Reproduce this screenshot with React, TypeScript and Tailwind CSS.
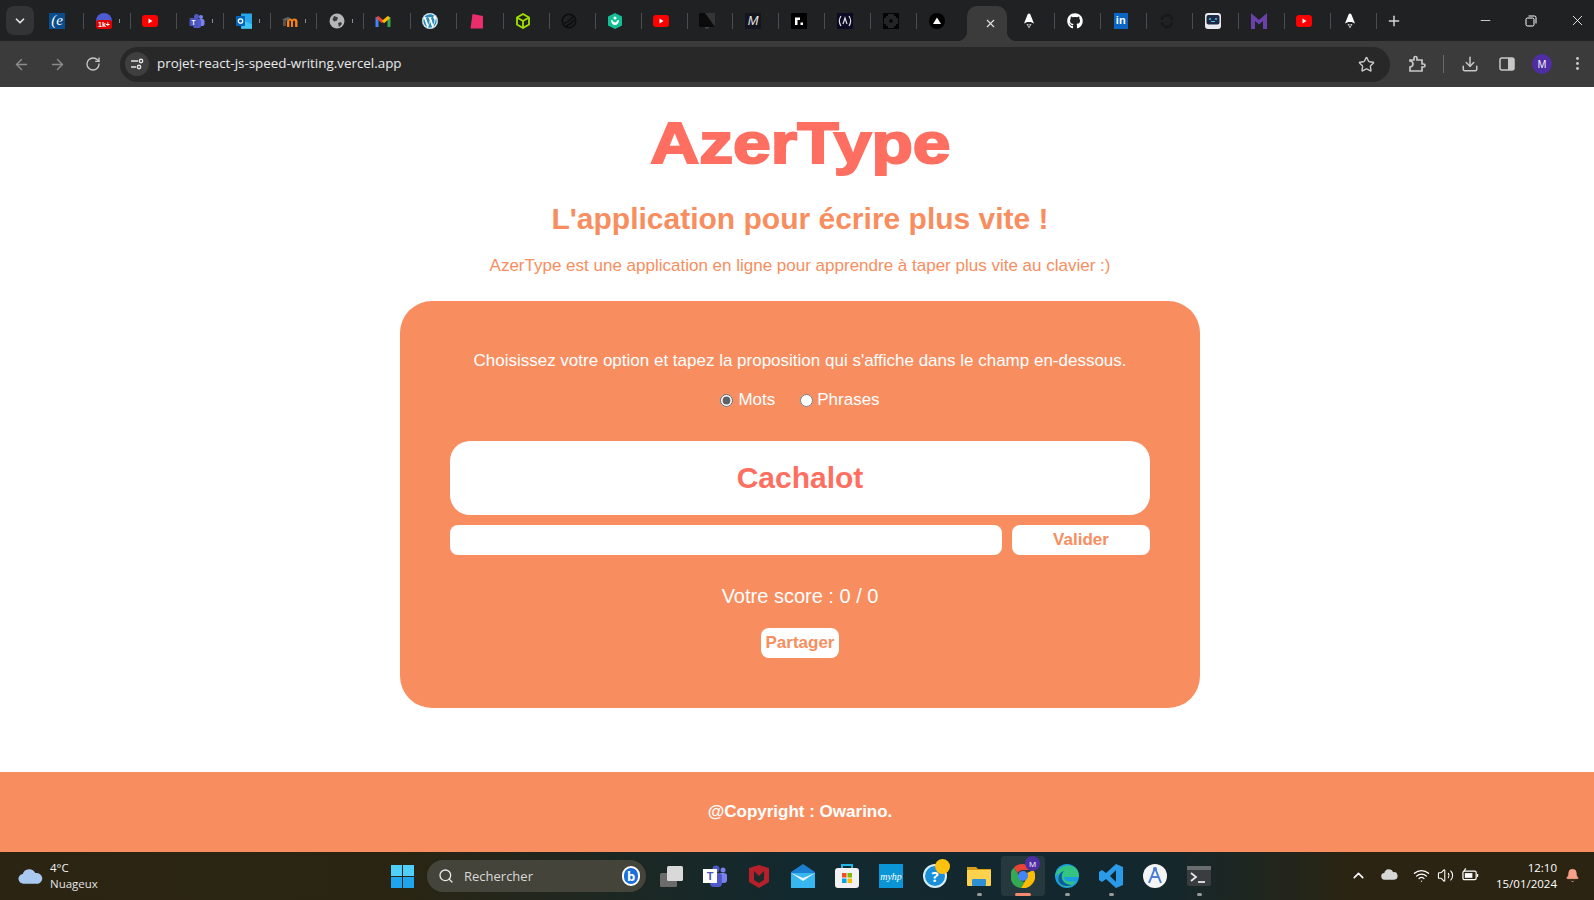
import type { ReactNode } from "react";
import { ChevronDown, ChevronUp, Download, MoreVertical, Plus, RotateCw, Search, Star, X, ArrowLeft, ArrowRight, Minus, Volume2, Wifi, Bell } from "lucide-react";
import { FaGithub, FaWordpress } from "react-icons/fa";

const Yt = () => (
  <svg viewBox="0 0 16 12" className="h-3 w-4">
    <rect width="16" height="12" rx="3" fill="#f00" />
    <path d="M6.500 3.500l4 2.500-4 2.500z" fill="#fff" />
  </svg>
);

const Rocket = () => (
  <svg viewBox="0 0 16 16" className="h-4 w-4">
    <path d="M8 0.500c1 0 1.600 1 2.200 3l2.800 7-3.300-1.500H6.300L3 10.500l2.800-7C6.400 1.500 7 .5 8 .5z" fill="#fff" />
    <path d="M5.500 11h5L8 15.500z" fill="#ccc" />
    <path d="M6.800 11.500h2.400L8 13.800z" fill="#1f2122" />
  </svg>
);

const tabsBefore: { icon: ReactNode; mark?: boolean }[] = [
  { icon: <div className="flex h-4 w-4 items-center justify-center bg-[#0a4d8c] font-['Liberation_Serif',serif] text-[15px] italic leading-none text-white">(e</div> },
  { icon: <svg viewBox="0 0 16 16" className="h-4 w-4"><circle cx="8" cy="8" r="8" fill="#4f5bd5" /><rect x="0" y="7" width="16" height="9" rx="2.500" fill="#e00000" /><text x="8" y="14" textAnchor="middle" fontSize="7" fontWeight="700" fill="#fff" fontFamily="Liberation Sans">1k+</text></svg>, mark: true },
  { icon: <Yt /> },
  { icon: <svg viewBox="0 0 16 16" className="h-4 w-4"><circle cx="12" cy="4" r="2" fill="#7b83eb" /><rect x="9" y="6" width="6.500" height="7" rx="2" fill="#7b83eb" /><circle cx="7.500" cy="3.500" r="2.500" fill="#5059c9" /><rect x="4" y="6" width="8" height="9" rx="2" fill="#5059c9" /><rect x="0.500" y="5" width="8" height="8" rx="1" fill="#4b53bc" /><text x="4.500" y="11.500" textAnchor="middle" fontSize="6.500" fontWeight="700" fill="#fff" fontFamily="Liberation Sans">T</text></svg>, mark: true },
  { icon: <svg viewBox="0 0 16 16" className="h-4 w-4"><rect x="5" y="0.500" width="11" height="15" fill="#28a8ea" /><path d="M9 8l7 3.500V16H5z" fill="#50d9ff" opacity=".6" /><rect x="0" y="3" width="9" height="10" fill="#0364b8" /><circle cx="4.500" cy="8" r="2.200" fill="none" stroke="#fff" strokeWidth="1.300" /></svg>, mark: true },
  { icon: <svg viewBox="0 0 16 16" className="h-4 w-4"><path d="M5 14V8.500C5 6.500 6.500 5.500 8 5.500c1 0 1.800.3 2.300 1 .5-.7 1.300-1 2.200-1 1.700 0 3 1 3 3V14h-2.400V9c0-1-.3-1.500-1-1.500S11 8 11 9v5H9V9c0-1-.3-1.500-1-1.500S7.400 8 7.400 9v5z" fill="#f98012" /><path d="M0 6.500L6 4l3 1.500L4 8z" fill="#666" /><path d="M1 7v6h3V8z" fill="#555" /></svg>, mark: true },
  { icon: <svg viewBox="0 0 16 16" className="h-4 w-4"><circle cx="8" cy="8" r="7.500" fill="#b4b6b8" /><path d="M5 3l4 1.500-1 3-3 1-1.500-2zM9 10l3-1 1 2-3 3z" fill="#3a3b3d" /></svg>, mark: true },
  { icon: <svg viewBox="0 0 16 16" className="h-4 w-4" fill="none" strokeWidth="3"><path d="M2 14V4" stroke="#4285f4" /><path d="M14 14V4" stroke="#34a853" /><path d="M2 4l6 5" stroke="#ea4335" /><path d="M14 4L8 9" stroke="#fbbc04" /></svg> },
  { icon: <FaWordpress size={16} color="#2b8ab8" className="rounded-full bg-white" /> },
  { icon: <svg viewBox="0 0 16 16" className="h-4 w-4"><path d="M3.500 1L14 3v12.500H1.500z" fill="#ea2e6c" /></svg> },
  { icon: <svg viewBox="0 0 16 16" className="h-4 w-4" fill="none" stroke="#a3e000" strokeWidth="1.800"><path d="M8 1l6 3.500v7L8 15l-6-3.500v-7z" /><path d="M2 4.500L8 8l6-3.500M8 8v7" /></svg> },
  { icon: <svg viewBox="0 0 16 16" className="h-4 w-4" fill="none" stroke="#0c0d0e" strokeWidth="1.500"><circle cx="8" cy="8" r="6.800" /><path d="M3 10c3 0 7-3 9-7M5 13c3-1 6-3 8-6" /></svg> },
  { icon: <svg viewBox="0 0 16 16" className="h-4 w-4"><path d="M8 0l7 3.500v9L8 16l-7-3.500v-9z" fill="#14bf96" /><circle cx="8" cy="5" r="1.500" fill="#fff" /><path d="M4 7c0 3 2 5 4 5s4-2 4-5l-2 .5c0 1-1 2-2 2s-2-1-2-2z" fill="#fff" /></svg> },
  { icon: <Yt /> },
  { icon: <svg viewBox="0 0 16 16" className="h-4 w-4"><rect width="16" height="14" fill="#0b0b0b" /><path d="M6 0h10v14z" fill="#333537" /><rect x="6" y="14" width="4" height="1.500" fill="#444" /></svg> },
  { icon: <div className="flex h-4 w-4 items-center justify-center bg-[#14141f] font-['Liberation_Sans',sans-serif] text-[13px] italic leading-none text-[#e5e5e5]">M</div> },
  { icon: <svg viewBox="0 0 16 16" className="h-4 w-4"><rect width="16" height="16" rx="1" fill="#000" /><path d="M4 12V4.500h5V7H6.500v5z" fill="#fff" /><rect x="9.500" y="9.500" width="2.500" height="2.500" fill="#fff" /></svg> },
  { icon: <svg viewBox="0 0 16 16" className="h-4 w-4"><rect width="16" height="16" fill="#0a0a23" /><path d="M4 3c-2 3-2 7 0 10M12 3c2 3 2 7 0 10M6 11l2-6 2 6" fill="none" stroke="#dfdfe2" strokeWidth="1.200" /></svg> },
  { icon: <svg viewBox="0 0 16 16" className="h-4 w-4"><rect width="16" height="16" fill="#050505" /><path d="M5 1h6v2h2v2h2v6h-2v2h-2v2H5v-2H3v-2H1V5h2V3h2z" fill="#242526" /><circle cx="8" cy="8" r="1.800" fill="#050505" /></svg> },
  { icon: <svg viewBox="0 0 16 16" className="h-4 w-4"><circle cx="8" cy="8" r="8" fill="#000" /><path d="M8 4.500l4 6.500H4z" fill="#fff" /></svg> },
];

const tabsAfter: ReactNode[] = [
  <Rocket />,
  <FaGithub size={16} color="#fff" />,
  <div className="flex h-4 w-[14px] items-center justify-center bg-[#0a66c2] text-[11px] font-bold leading-none text-white">in</div>,
  <svg viewBox="0 0 16 16" className="h-4 w-4" fill="none" stroke="#18191b" strokeWidth="2.500"><path d="M3 7a5 5 0 0 1 10 0M13 9a5 5 0 0 1-10 0" /></svg>,
  <svg viewBox="0 0 16 16" className="h-4 w-4"><rect width="16" height="16" rx="3" fill="#e8eaf0" /><rect x="1.500" y="2" width="13" height="9.500" rx="2" fill="#1c2a44" /><circle cx="5" cy="6" r="1" fill="#4fc3f7" /><circle cx="11" cy="6" r="1" fill="#4fc3f7" /><path d="M6 8.500h4" stroke="#4fc3f7" /></svg>,
  <svg viewBox="0 0 16 16" className="h-4 w-4"><path d="M0 16V0l8 7 8-7v16h-4V8l-4 3.500L4 8v8z" fill="#6941a8" /></svg>,
  <Yt />,
  <Rocket />,
];

function Tab({ icon, mark, noSep, wide }: { icon: ReactNode; mark?: boolean; noSep?: boolean; wide?: boolean }) {
  return (
    <div
      className={[
        "relative flex h-[41px] shrink-0 items-center pl-[11.600px]",
        wide ? "w-[46.650px]" : "w-[45.950px]",
      ].join(" ")}
    >
      <div className="flex h-4 w-4 items-center justify-center">{icon}</div>
      {mark && <div className="absolute right-[11px] top-[19px] h-[4px] w-px bg-[#8a8c8e]" />}
      {!noSep && <div className="absolute right-0 top-[12.500px] h-4 w-px bg-[#4a4c4f]" />}
    </div>
  );
}

function TabBar() {
  return (
    <div className="flex h-[41px] shrink-0 items-center bg-[#1f2122]">
      <div className="ml-[6px] mr-[3.400px] flex h-[29px] w-[28px] shrink-0 items-center justify-center rounded-lg bg-[#323436]">
        <ChevronDown size={14} strokeWidth={3} className="text-[#e3e3e3]" />
      </div>
      {tabsBefore.map((t, i) => (
        <Tab key={i} icon={t.icon} mark={t.mark} wide={i < 10} noSep={i === tabsBefore.length - 1} />
      ))}
      {/* onglet actif */}
      <div className="relative ml-[3.600px] mr-[2.500px] mt-[6px] flex h-[35px] w-[40px] shrink-0 items-center justify-center self-start rounded-t-[10px] bg-[#3b3b3b] pl-[8px]">
        <div className="absolute -left-[10px] bottom-0 h-[10px] w-[10px] bg-[radial-gradient(circle_at_0_0,transparent_10px,#3b3b3b_10.500px)]" />
        <X size={13} strokeWidth={2} className="text-[#e3e3e3]" />
        <div className="absolute -right-[10px] bottom-0 h-[10px] w-[10px] bg-[radial-gradient(circle_at_100%_0,transparent_10px,#3b3b3b_10.500px)]" />
      </div>
      {tabsAfter.map((icon, i) => (
        <Tab key={i} icon={icon} />
      ))}
      <Plus size={16} strokeWidth={2.200} className="ml-[9.500px] text-[#d5d5d5]" />
      <div className="-mr-[6px] ml-auto flex items-center">
        <div className="flex w-[46px] justify-center"><Minus size={15} className="text-white" strokeWidth={1.200} /></div>
        <div className="flex w-[46px] justify-center">
          <svg viewBox="0 0 12 12" className="h-3 w-3" fill="none" stroke="#fff"><rect x="1" y="3" width="8" height="8" rx="1.500" /><path d="M3.500 1h6a1.500 1.500 0 0 1 1.500 1.500v6" /></svg>
        </div>
        <div className="flex w-[46px] justify-center"><X size={17} className="text-white" strokeWidth={1.200} /></div>
      </div>
    </div>
  );
}

function Toolbar() {
  return (
    <div className="flex h-[46px] shrink-0 items-center bg-[#3b3b3b]">
      <div className="flex w-[120px] items-center pl-[13px] text-[#8a8a8a]">
        <ArrowLeft size={17} strokeWidth={2} />
        <ArrowRight size={17} strokeWidth={2} className="ml-[19px]" />
        <RotateCw size={16} strokeWidth={2} className="ml-[19px] text-[#c7c7c7]" />
      </div>
      <div className="flex h-[35px] w-[1270px] items-center rounded-full bg-[#282828] pl-[5px] pr-[15px]">
        <div className="flex h-[24px] w-[24px] items-center justify-center rounded-full bg-[#3f3f3f]">
          <svg viewBox="0 0 14 14" className="h-[14px] w-[14px]" fill="none" stroke="#e3e3e3" strokeWidth="1.400"><path d="M1 4h7M1 10h5" /><circle cx="11" cy="4" r="1.700" /><circle cx="9" cy="10" r="1.700" /></svg>
        </div>
        <span className="ml-[8px] font-['Open_Sans',sans-serif] text-[13.400px] leading-none text-[#e8eaed]">projet-react-js-speed-writing.vercel.app</span>
        <Star size={17} strokeWidth={2} className="ml-auto text-[#c7c7c7]" />
      </div>
      <div className="relative h-full flex-1 text-[#c7c7c7]">
        <svg viewBox="0 0 18 18" className="absolute left-[18px] top-[14px] h-[18px] w-[18px]" fill="none" stroke="currentColor" strokeWidth="1.700"><path d="M2 5h4V3a1.500 1.500 0 0 1 3 0v2h5v4h1.500a1.500 1.500 0 0 1 0 3H14v4H2v-4a2 2 0 0 0 0-6z" /></svg>
        <div className="absolute left-[53px] top-[14px] h-[18px] w-px bg-[#6a6a6a]" />
        <Download size={18} strokeWidth={2} className="absolute left-[71px] top-[14px]" />
        <svg viewBox="0 0 16 16" className="absolute left-[109px] top-[15px] h-4 w-4"><rect x="1" y="2" width="14" height="12" rx="2" fill="none" stroke="currentColor" strokeWidth="1.500" /><rect x="9" y="2" width="6" height="12" rx="1" fill="currentColor" /></svg>
        <div className="absolute left-[142px] top-[13px] flex h-5 w-5 items-center justify-center rounded-full bg-[#4f2ea3] font-['Open_Sans',sans-serif] text-[10px] text-white">M</div>
        <MoreVertical size={17} strokeWidth={2.200} className="absolute left-[179px] top-[14px]" />
      </div>
    </div>
  );
}

function Card() {
  return (
    <section className="mt-[23px] w-[800px] rounded-[32px] bg-[#f88e60] px-[50px] pb-[50px] pt-[48px] text-white">
      <p className="text-center text-[17px] leading-6">
        Choisissez votre option et tapez la proposition qui s'affiche dans le champ en-dessous.
      </p>
      <div className="mt-[15px] flex h-6 items-center justify-center text-[17px]">
        <input type="radio" name="mode" defaultChecked className="m-0 h-[13px] w-[13px] accent-[#5f6368]" />
        <label className="ml-[5px]">Mots</label>
        <input type="radio" name="mode" className="m-0 ml-[25px] h-[13px] w-[13px]" />
        <label className="ml-[4px]">Phrases</label>
      </div>
      <div className="mt-[29px] flex h-[74px] items-center justify-center rounded-[20px] bg-white pb-[2px] text-[30px] font-bold text-[#fe6f61]">
        Cachalot
      </div>
      <div className="mt-[10px] flex gap-[10px]">
        <input type="text" className="h-[30px] flex-1 rounded-lg bg-white px-2 outline-none" />
        <button type="button" className="h-[30px] w-[138px] rounded-lg bg-white text-[17px] font-bold text-[#f88e60]">
          Valider
        </button>
      </div>
      <p className="mt-[26px] text-center text-[20px] leading-[30px]">Votre score : 0 / 0</p>
      <div className="mt-[17px] flex justify-center">
        <button type="button" className="h-[30px] rounded-lg bg-white px-[5px] text-[17px] font-bold text-[#f88e60]">
          Partager
        </button>
      </div>
    </section>
  );
}

const dock: { node: ReactNode; dot?: "gray" | "active" }[] = [
  { node: <svg viewBox="0 0 24 24" className="h-6 w-6"><rect x="1" y="9" width="17" height="14" rx="1.500" fill="#6b6b6b" /><rect x="8" y="2" width="16" height="15" rx="1.500" fill="#d9d9d9" /></svg> },
  { node: <svg viewBox="0 0 24 24" className="h-6 w-6"><circle cx="20" cy="6" r="2.500" fill="#7b83eb" /><rect x="15" y="9" width="9" height="10" rx="3" fill="#7b83eb" /><circle cx="13" cy="5" r="3.500" fill="#5059c9" /><rect x="7" y="9" width="12" height="14" rx="4" fill="#5059c9" /><rect x="0" y="5" width="14" height="14" fill="#fff" /><text x="7" y="16" textAnchor="middle" fontSize="11" fontWeight="700" fill="#4b53bc" fontFamily="Liberation Sans">T</text></svg> },
  { node: <svg viewBox="0 0 24 24" className="h-6 w-6"><path d="M2 4l10-3 10 3v14l-10 6L2 18z" fill="#b5202a" /><path d="M7 7l5 5 5-5v9l-5 3-5-3z" fill="#1c2a2c" /></svg> },
  { node: <svg viewBox="0 0 24 24" className="h-6 w-6"><path d="M0 8l12-8 12 8v16H0z" fill="#1a7fd1" /><path d="M0 9h24v15H0z" fill="#38b6f0" /><path d="M0 9l12 8 12-8-12 5z" fill="#e8f6fe" /></svg> },
  { node: <svg viewBox="0 0 24 24" className="h-6 w-6"><path d="M7 5V1h10v4" fill="none" stroke="#22b5e8" strokeWidth="2" /><rect x="0" y="4" width="24" height="20" rx="3" fill="#f2f2f2" /><rect x="7" y="9" width="4.500" height="4.500" fill="#f25022" /><rect x="12.500" y="9" width="4.500" height="4.500" fill="#7fba00" /><rect x="7" y="14.500" width="4.500" height="4.500" fill="#00a4ef" /><rect x="12.500" y="14.500" width="4.500" height="4.500" fill="#ffb900" /></svg> },
  { node: <div className="flex h-6 w-6 items-center justify-center bg-[#0a96d6] font-['Liberation_Serif',serif] text-[10px] italic text-white">myhp</div> },
  {
    node: (
      <div className="relative h-6 w-6">
        <div className="flex h-6 w-6 items-center justify-center rounded-full border-2 border-[#d8eefa] bg-[#1b90d8] text-[15px] font-bold leading-none text-white">?</div>
        <div className="absolute -right-[3px] -top-[5px] h-[15px] w-[15px] rounded-full bg-[#ffc20e]" />
      </div>
    ),
  },
  { node: <svg viewBox="0 0 24 24" className="h-6 w-6"><path d="M0 3h9l2 2h13v4H0z" fill="#d99e1a" /><rect x="0" y="6" width="24" height="16" rx="1" fill="#ffd24d" /><rect x="5" y="15" width="14" height="7" rx="1" fill="#2d8fd5" /></svg>, dot: "gray" },
  {
    node: (
      <div className="relative h-6 w-6">
        <svg viewBox="0 0 24 24" className="h-6 w-6">
          <path d="M12 0a12 12 0 0 1 10.400 6H12a6 6 0 0 0-5.500 3.500L3 3.500A12 12 0 0 1 12 0z" fill="#ea4335" />
          <path d="M3 3.500l5.500 9.500a6 6 0 0 0 5 5l-3.500 6A12 12 0 0 1 3 3.500z" fill="#34a853" />
          <path d="M22.400 6A12 12 0 0 1 10 24l5.500-9.500A6 6 0 0 0 16 9z" fill="#fbbc04" />
          <circle cx="12" cy="12" r="5" fill="#4285f4" />
        </svg>
        <div className="absolute -right-[5px] -top-[8px] flex h-[15px] w-[15px] items-center justify-center rounded-full bg-[#4f2ea3] text-[8px] text-white">M</div>
      </div>
    ),
    dot: "active",
  },
  { node: <svg viewBox="0 0 24 24" className="h-6 w-6"><circle cx="12" cy="12" r="12" fill="#1b9de2" /><path d="M0 12C2 3 12-1 19 3c4 2 5 7 5 10H9c0 4 5 6 12 4-3 5-10 8-15 4-4-3-4-9 0-12-3 1-5 2-6 3z" fill="#33c481" /><path d="M4 18c-2-5 1-10 5-11-3 3-3 8 0 11 2 2 5 3 8 3-5 2-11 1-13-3z" fill="#0c59a4" /></svg>, dot: "gray" },
  { node: <svg viewBox="0 0 24 24" className="h-6 w-6"><path d="M17 0l7 3v18l-7 3-10-9-4 3-3-2V8l3-2 4 3zM17 6l-6 6 6 6z" fill="#2a9be8" /></svg>, dot: "gray" },
  { node: <svg viewBox="0 0 24 24" className="h-6 w-6"><circle cx="12" cy="12" r="12" fill="#f5f5f5" /><path d="M12 4l-6 15M12 4l6 15M8 13h8" stroke="#4a7fd8" strokeWidth="2" fill="none" /><circle cx="12" cy="5" r="2" fill="#4a7fd8" /></svg> },
  { node: <svg viewBox="0 0 24 24" className="h-6 w-6"><rect y="2" width="24" height="20" rx="2" fill="#3a3d40" /><rect y="2" width="24" height="4" fill="#6a6d70" /><path d="M4 9l5 4-5 4" fill="none" stroke="#e6e6e6" strokeWidth="1.800" /><path d="M11 18h7" stroke="#e6e6e6" strokeWidth="1.800" /></svg>, dot: "gray" },
];

function Taskbar() {
  return (
    <div className="flex h-12 shrink-0 items-center bg-[linear-gradient(90deg,#2b2412_0%,#2a2513_25%,#12292f_50%,#13282e_72%,#2b2412_85%,#2b2412_100%)] font-['Open_Sans',sans-serif] text-white">
      <svg viewBox="0 0 26 18" className="ml-[18px] h-[18px] w-[25px] shrink-0">
        <path d="M6 17a5 5 0 0 1-1-10 7 7 0 0 1 13-1 5.500 5.500 0 0 1 3 11z" fill="#a9c9f0" />
      </svg>
      <div className="ml-[7px] w-[341px] shrink-0 text-[11.500px] leading-4">
        <div className="text-[#f2f2f2]">4°C</div>
        <div className="text-[#e3e3e3]">Nuageux</div>
      </div>
      <div className="grid h-[23px] w-[23px] shrink-0 grid-cols-2 gap-[1px]">
        <div className="bg-[#4fd0fb]" />
        <div className="bg-[#4fd0fb]" />
        <div className="bg-[#1ea5ee]" />
        <div className="bg-[#1ea5ee]" />
      </div>
      <div className="ml-[13px] flex h-8 w-[219px] shrink-0 items-center rounded-full bg-[#44443a] pl-[11px] pr-[6px]">
        <Search size={16} strokeWidth={2} className="text-[#e8e8e8]" />
        <span className="ml-[10px] pt-[1px] text-[13px] text-[#d9d9d9]">Rechercher</span>
        <div className="ml-auto flex h-[20px] w-[18px] items-center justify-center rounded-full border-2 border-white bg-[#1b6fd8] text-[13px] font-bold leading-none text-white">b</div>
      </div>
      <div className="flex shrink-0 pl-[3px]">
        {dock.map((d, i) => (
          <div
            key={i}
            className={[
              "relative flex h-10 w-11 items-center justify-center rounded",
              d.dot === "active" ? "bg-[#ffffff14]" : "",
            ].join(" ")}
          >
            {d.node}
            {d.dot === "gray" && <div className="absolute bottom-0 h-[3px] w-[5px] rounded-full bg-[#9a9a9a]" />}
            {d.dot === "active" && <div className="absolute bottom-0 h-[3px] w-[16px] rounded-full bg-[#f48a70]" />}
          </div>
        ))}
      </div>
      <div className="relative h-full flex-1">
        <ChevronUp size={17} strokeWidth={2.200} className="absolute left-[129px] top-[15px]" />
        <svg viewBox="0 0 18 11" className="absolute left-[160px] top-[17px] h-[11px] w-[17px]"><path d="M4 11a3.500 3.500 0 0 1-.5-7A5 5 0 0 1 13 3a4 4 0 0 1 1 8z" fill="#d6d6d6" /></svg>
        <Wifi size={17} strokeWidth={1.800} className="absolute left-[192px] top-[15px]" />
        <Volume2 size={17} strokeWidth={1.500} className="absolute left-[216px] top-[15px]" />
        <svg viewBox="0 0 18 14" className="absolute left-[241px] top-[16px] h-[14px] w-[17px]" fill="none" stroke="#fff" strokeWidth="1.300"><rect x="1" y="3" width="14" height="9" rx="1.500" /><rect x="3" y="5" width="8" height="5" fill="#fff" stroke="none" /><path d="M16.500 6v3" /><path d="M4 0L2 3" /></svg>
        <div className="absolute right-[37px] top-[8px] whitespace-nowrap text-right text-[11.500px] leading-4">
          <div>12:10</div>
          <div>15/01/2024</div>
        </div>
        <Bell size={15} fill="#f9a088" strokeWidth={1} className="absolute right-[14px] top-[16px] text-[#f9a088]" />
      </div>
    </div>
  );
}

export default function App() {
  return (
    <div className="flex h-[900px] w-[1594px] flex-col overflow-hidden bg-white font-['Liberation_Sans',sans-serif]">
      <TabBar />
      <Toolbar />
      <main className="flex flex-1 flex-col items-center pl-[6px]">
        {/* le titre de la maquette est plus gras et plus large que Liberation Sans Bold */}
        <h1 className="mt-[16px] inline-block scale-x-[1.17] text-[58px] font-bold leading-[80px] text-[#fe6f61] [-webkit-text-stroke:2px_#fe6f61]">AzerType</h1>
        <h2 className="mt-[16px] text-[30px] font-bold leading-10 text-[#f88e60]">L'application pour écrire plus vite !</h2>
        <p className="mt-[15px] text-[17px] leading-6 text-[#f88e60]">
          AzerType est une application en ligne pour apprendre à taper plus vite au clavier :)
        </p>
        <Card />
      </main>
      <footer className="flex h-20 shrink-0 items-start justify-center bg-[#f88e60] pl-[6px] pt-[30px] text-[17px] font-bold leading-5 text-white">
        @Copyright : Owarino.
      </footer>
      <Taskbar />
    </div>
  );
}
